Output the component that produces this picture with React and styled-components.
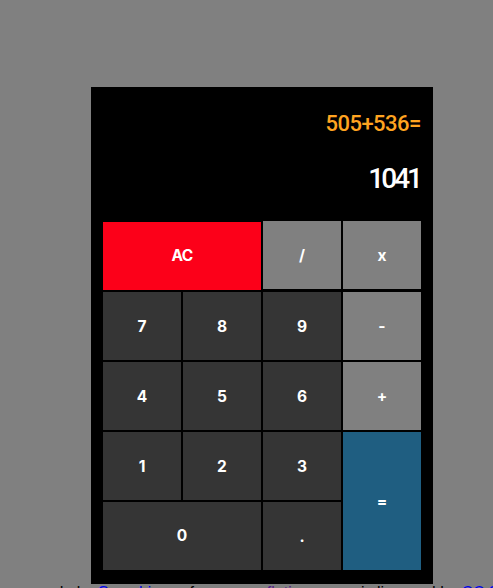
import React from "react";
import styled, { createGlobalStyle } from "styled-components";

const GlobalStyle = createGlobalStyle`
  * { box-sizing: border-box; }
  html, body { margin: 0; height: 100%; overflow: hidden; background: #808080; }
  body { font-family: "Liberation Sans", Arial, sans-serif; font-size: 16px; }
`;

const Page = styled.main`
  display: flex;
  flex-direction: column;
  height: 588px;
  padding-top: 87px;
  overflow: hidden;
`;

const Calculator = styled.section`
  flex: none;
  width: 342px;
  height: 497px;
  margin-left: 91px;
  padding: 20px 12px 14px;
  background: #000;
`;

const Display = styled.div`
  display: flex;
  flex-direction: column;
  align-items: flex-end;
  height: 115px;
  white-space: nowrap;
`;

const Formula = styled.div`
  height: 34px;
  font: 500 22px/34px Roboto, sans-serif;
  letter-spacing: -0.5px;
  color: #ffa420;
`;

const Output = styled.div`
  height: 40px;
  margin: 18px 1px 0 0;
  font: 500 28px/40px Roboto, sans-serif;
  letter-spacing: -3px;
  color: #fff;
`;

const Keypad = styled.div`
  display: grid;
  grid-template-columns: repeat(4, 78px);
  grid-template-rows: repeat(5, 68px);
  gap: 2px;
`;

const tones = { digit: "#353535", operator: "#808080", clear: "#fc0019", equals: "#1f5e81" };

const Key = styled.button`
  grid-column: span ${(p) => p.$cols || 1};
  grid-row: span ${(p) => p.$rows || 1};
  margin: ${(p) => (p.$raised ? "-1px 0 1px" : "0")};
  padding: 0 0 ${(p) => (p.$cols ? "2px" : "0")};
  border: 0;
  background: ${(p) => tones[p.$tone || "digit"]};
  color: #fff;
  font: 700 15.5px Inter, sans-serif;
  letter-spacing: ${(p) => (p.$tone === "clear" ? "-0.7px" : "0")};
`;

const Credit = styled.footer`
  flex: none;
  margin-left: -10.5px;
  line-height: 18px;
  white-space: pre;
  color: #000;
`;

const CreditLink = styled.a`
  margin-left: ${(p) => (p.$visited ? "2.5px" : "0")};
  color: ${(p) => (p.$visited ? "#551a8b" : "#0000ee")};
  text-decoration: underline;
`;

const keys = [
  { label: "AC", tone: "clear", cols: 2 },
  { label: "/", tone: "operator", raised: true },
  { label: "x", tone: "operator", raised: true },
  { label: "7" },
  { label: "8" },
  { label: "9" },
  { label: "-", tone: "operator" },
  { label: "4" },
  { label: "5" },
  { label: "6" },
  { label: "+", tone: "operator" },
  { label: "1" },
  { label: "2" },
  { label: "3" },
  { label: "=", tone: "equals", rows: 2 },
  { label: "0", cols: 2 },
  { label: "." },
];

export default function App() {
  return (
    <Page>
      <GlobalStyle />
      <Calculator>
        <Display>
          <Formula>505+536=</Formula>
          <Output>1041</Output>
        </Display>
        <Keypad>
          {keys.map((k) => (
            <Key key={k.label} $tone={k.tone} $cols={k.cols} $rows={k.rows} $raised={k.raised}>
              {k.label}
            </Key>
          ))}
        </Keypad>
      </Calculator>
      <Credit>
        Icons made by <CreditLink>Smashicons</CreditLink> from{" "}
        <CreditLink $visited>www.flaticon.com</CreditLink>{"  "}is licensed by{" "}
        <CreditLink>CC 3.0 BY</CreditLink>
      </Credit>
    </Page>
  );
}
